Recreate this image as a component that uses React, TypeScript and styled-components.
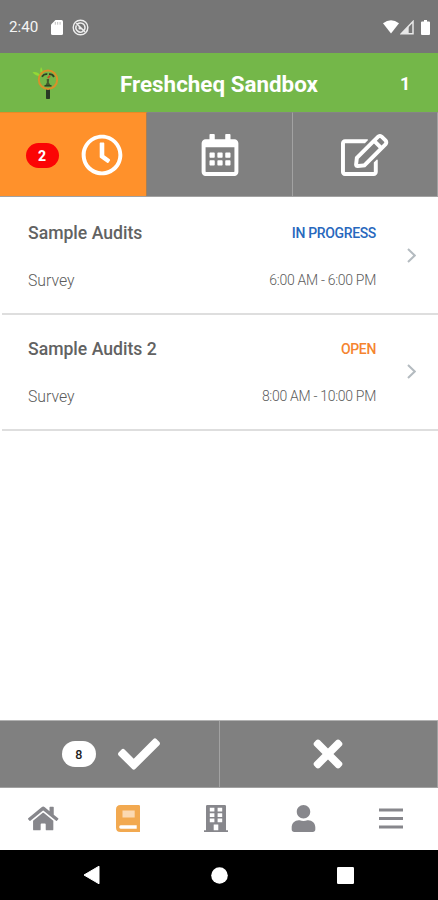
import React from "react";
import styled, { createGlobalStyle, css } from "styled-components";
import {
  FaRegClock,
  FaRegCalendarAlt,
  FaRegEdit,
  FaCheck,
  FaTimes,
  FaHome,
  FaUser,
} from "react-icons/fa";

const GlobalStyle = createGlobalStyle`
  * { box-sizing: border-box; }
  body { margin: 0; background: #fff; font-family: Roboto, "Liberation Sans", sans-serif; }
`;

const Screen = styled.div`
  width: 438px;
  height: 900px;
  display: flex;
  flex-direction: column;
  background: #fff;
  overflow: hidden;
`;

const StatusBar = styled.div`
  height: 53px;
  flex: none;
  display: flex;
  align-items: center;
  padding: 1px 8px 0 9px;
  background: #767676;
  color: #f4f4f4;
  svg { display: block; flex: none; }
`;

const Time = styled.span`
  width: 42px;
  font-size: 15.2px;
  line-height: 20px;
`;

const StatusGroup = styled.div<{ $gap: number; $end?: boolean }>`
  display: flex;
  align-items: center;
  gap: ${(p) => p.$gap}px;
  ${(p) => p.$end && css`margin-left: auto;`}
`;

const BatterySlot = styled.span`
  padding-left: 6px;
`;

const Header = styled.header`
  height: 59px;
  flex: none;
  display: grid;
  grid-template-columns: 94px 250px 94px;
  align-items: center;
  background: #74b749;
  color: #fff;
`;

const Logo = styled.div`
  padding: 2px 0 0 32px;
  svg { display: block; }
`;

const Title = styled.h1`
  margin: 3px 0 0;
  text-align: center;
  font-size: 22.4px;
  line-height: 28px;
  font-weight: 700;
  white-space: nowrap;
`;

const HeaderCount = styled.span`
  padding: 2px 0 0 56px;
  font-size: 18px;
  font-weight: 700;
`;

const Tabs = styled.nav`
  height: 85px;
  flex: none;
  display: grid;
  grid-template-columns: 147px 146px 145px;
  border-bottom: 1px solid #a2a2a2;
`;

const Tab = styled.button<{ $active?: boolean }>`
  display: flex;
  align-items: center;
  justify-content: center;
  gap: 22px;
  margin: 0;
  padding: ${(p) => (p.$active ? "1px 0 0 2px" : "1px 0 0")};
  border: 0;
  border-top: 1px solid ${(p) => (p.$active ? "#e98a25" : "#858585")};
  border-right: 1px solid ${(p) => (p.$active ? "#a58058" : "#a2a2a2")};
  background: ${(p) => (p.$active ? "#ff912b" : "#808080")};
  color: #fff;
  svg { display: block; height: 42px; width: auto; flex: none; }
`;

const EditIcon = styled(FaRegEdit)`
  && { width: 47.25px; }
`;

const Badge = styled.span<{ $light?: boolean }>`
  width: ${(p) => (p.$light ? 34 : 33)}px;
  height: ${(p) => (p.$light ? 26 : 25)}px;
  border-radius: 13px;
  display: flex;
  align-items: center;
  justify-content: center;
  background: ${(p) => (p.$light ? "#fff" : "#fb0505")};
  color: ${(p) => (p.$light ? "#222" : "#fff")};
  font-family: Roboto, sans-serif;
  font-size: ${(p) => (p.$light ? 12.5 : 14)}px;
  font-weight: ${(p) => (p.$light ? 500 : 800)};
  padding-top: 1px;
`;

const List = styled.main`
  flex: 1;
  padding: 2px 0 0 2px;
`;

const Row = styled.article`
  height: 116px;
  display: grid;
  grid-template-columns: 1fr 62px;
  align-items: center;
  border-bottom: 2px solid #dedede;
`;

const RowBody = styled.div`
  display: grid;
  grid-template-columns: auto auto;
  grid-template-rows: 24px 24px;
  row-gap: 23px;
  align-items: center;
  padding: 1px 0 0 26px;
`;

const RowTitle = styled.h2`
  margin: 0;
  font-size: 17.6px;
  font-weight: 500;
  color: #626262;
`;

const RowStatus = styled.span<{ $color: string }>`
  justify-self: end;
  font-size: 14px;
  font-weight: 500;
  letter-spacing: -0.35px;
  color: ${(p) => p.$color};
`;

const RowKind = styled.span`
  font-size: 15.8px;
  font-weight: 300;
  color: #5c5c5c;
`;

const RowHours = styled(RowKind)`
  justify-self: end;
  font-size: 14px;
  letter-spacing: -0.3px;
`;

const Chevron = styled.svg`
  display: block;
  width: 9px;
  height: 15px;
  margin: -2px 0 0 31px;
`;

const Actions = styled.div`
  height: 68px;
  flex: none;
  display: grid;
  grid-template-columns: 219.5px 218.5px;
  border-top: 1px solid #b2b2b2;
  border-bottom: 1px solid #a2a2a2;
`;

const Action = styled(Tab)<{ $shift?: boolean }>`
  border-top: 0;
  border-right-color: #a2a2a2;
  padding: 0 0 0 ${(p) => (p.$shift ? 3 : 0)}px;
`;

const BottomNav = styled.nav`
  height: 62px;
  flex: none;
  display: grid;
  grid-template-columns: 87px 82px 93px 82px 93px;
  align-items: center;
  justify-items: center;
  padding-bottom: 1px;
  color: #87878c;
  svg { display: block; height: 27px; width: auto; }
`;

const HomeIcon = styled(FaHome)`
  && { width: 30.4px; }
`;

const SystemBar = styled.div`
  height: 50px;
  flex: none;
  display: grid;
  grid-template-columns: 126px 126px 126px;
  justify-content: center;
  justify-items: center;
  align-items: center;
  background: #000;
  svg { display: block; }
`;

const BackIcon = styled.svg`
  margin-right: 4px;
`;

const SdCard = () => (
  <svg width="12" height="15" viewBox="0 0 12 15">
    <path d="M4.5 0H10.5Q12 0 12 1.5V13.5Q12 15 10.5 15H1.5Q0 15 0 13.5V4.5Z" fill="#fff" />
    <path d="M4.3 2v2.7M6.7 2v2.7M9.1 2v2.7" stroke="#b5b5b5" strokeWidth=".9" />
  </svg>
);

const SyncOff = () => (
  <svg width="17" height="17" viewBox="0 0 17 17" fill="none" stroke="#eee">
    <circle cx="8.5" cy="8.5" r="7.3" strokeWidth="1.4" />
    <path
      d="M5.4 5.1A4.6 4.6 0 0 1 13 8.5 4.6 4.6 0 0 1 12.3 11M4.5 6.3A4.6 4.6 0 0 0 11 12.4M4.2 4.2l8.7 8.7M7 8.5a1.6 1.6 0 0 0 1.6 1.6"
      strokeWidth="1.5"
    />
  </svg>
);

const Wifi = () => (
  <svg width="16" height="14" viewBox="0 0 16 14">
    <path d="M0 3.2Q8-2.6 16 3.2L8 13.6Z" fill="#fff" />
  </svg>
);

const Signal = () => (
  <svg width="14" height="15" viewBox="0 0 14 15">
    <path d="M13 1.5V13.8H1.2Z" fill="none" stroke="#e8e8e8" strokeWidth="1.5" />
    <path d="M1 14 8.7 6V14Z" fill="#e8e8e8" />
  </svg>
);

const Battery = () => (
  <svg width="9" height="15" viewBox="0 0 9 15">
    <path d="M3 0H6V1.5H8Q9 1.5 9 2.5V14Q9 15 8 15H1Q0 15 0 14V2.5Q0 1.5 1 1.5H3Z" fill="#fff" />
  </svg>
);

const BrandMark = () => (
  <svg width="28" height="33" viewBox="0 0 28 33">
    <path d="M.5 5.2Q6 4.2 9.2 9.5Q3.5 9 .5 5.2ZM9 0Q12 4.5 10 8.5Q7 4.5 9 0Z" fill="#92d936" />
    <rect x="14" y="21.5" width="4" height="10.5" rx=".7" fill="#293a25" />
    <circle cx="16" cy="12.8" r="9.2" fill="none" stroke="#d9902a" strokeWidth="2" />
    <path d="M10 9.7Q12 6.5 15.3 7.2M17 7.2Q20.5 7 22 10" fill="none" stroke="#2d4324" strokeWidth="1.7" />
    <path d="M15.8 11.2 18 8.6" stroke="#c7532b" strokeWidth="2" />
    <path d="M14.7 12h2.4l-.3 3.4 2 3.3h-5.6l1.7-3.3Z" fill="#425b2d" />
    <path d="M12.5 18.8h7" stroke="#2d4324" strokeWidth="1.6" />
  </svg>
);

const Book = () => (
  <svg viewBox="0 0 24 27">
    <path
      fillRule="evenodd"
      d="M4.5 0H22.7Q24 0 24 1.3V27H4.5Q0 27 0 22.5V4.5Q0 0 4.5 0ZM4.7 20.3Q3.2 20.3 3.2 22T4.7 23.7H20.7V20.3Z"
      fill="#f2a950"
    />
    <rect x="6.5" y="5.5" width="12.2" height="7" fill="#fbd9b2" />
  </svg>
);

const Building = () => (
  <svg viewBox="0 0 24 27" fill="#87878c">
    <path d="M3.2 0H20.8Q22 0 22 1.3V25.2H24V27H0V25.2H2V1.3Q2 0 3.2 0Z" />
    <path
      d="M5.8 2.8h4.6v3.7H5.8zM13.6 2.8h4.6v3.7h-4.6zM5.8 8.2h4.6v3.7H5.8zM13.6 8.2h4.6v3.7h-4.6zM5.8 13.6h4.6v3.7H5.8zM13.6 13.6h4.6v3.7h-4.6zM9.7 19.4h4.6v5.8H9.7z"
      fill="#fff"
    />
  </svg>
);

const Menu = () => (
  <svg viewBox="0 0 24 27">
    <path d="M0 5h24M0 13.5h24M0 22h24" stroke="#87878c" strokeWidth="3" />
  </svg>
);

const audits = [
  { title: "Sample Audits", status: "IN PROGRESS", color: "#2868bd", hours: "6:00 AM - 6:00 PM" },
  { title: "Sample Audits 2", status: "OPEN", color: "#f5842f", hours: "8:00 AM - 10:00 PM" },
];

export default function App() {
  return (
    <Screen>
      <GlobalStyle />
      <StatusBar>
        <Time>2:40</Time>
        <StatusGroup $gap={9}>
          <SdCard />
          <SyncOff />
        </StatusGroup>
        <StatusGroup $gap={1} $end>
          <Wifi />
          <Signal />
          <BatterySlot>
            <Battery />
          </BatterySlot>
        </StatusGroup>
      </StatusBar>
      <Header>
        <Logo>
          <BrandMark />
        </Logo>
        <Title>Freshcheq Sandbox</Title>
        <HeaderCount>1</HeaderCount>
      </Header>
      <Tabs>
        <Tab $active>
          <Badge>2</Badge>
          <FaRegClock />
        </Tab>
        <Tab>
          <FaRegCalendarAlt />
        </Tab>
        <Tab>
          <EditIcon />
        </Tab>
      </Tabs>
      <List>
        {audits.map((a) => (
          <Row key={a.title}>
            <RowBody>
              <RowTitle>{a.title}</RowTitle>
              <RowStatus $color={a.color}>{a.status}</RowStatus>
              <RowKind>Survey</RowKind>
              <RowHours>{a.hours}</RowHours>
            </RowBody>
            <Chevron viewBox="0 0 9 15">
              <path d="M1 1l6.7 6.5L1 14" fill="none" stroke="#b4bbc0" strokeWidth="2" />
            </Chevron>
          </Row>
        ))}
      </List>
      <Actions>
        <Action $shift>
          <Badge $light>8</Badge>
          <FaCheck />
        </Action>
        <Action>
          <FaTimes />
        </Action>
      </Actions>
      <BottomNav>
        <HomeIcon />
        <Book />
        <Building />
        <FaUser />
        <Menu />
      </BottomNav>
      <SystemBar>
        <BackIcon width="17" height="20" viewBox="0 0 17 20">
          <path d="M16 1.2V18.8L1 10Z" fill="#fff" stroke="#fff" strokeLinejoin="round" />
        </BackIcon>
        <svg width="17" height="17" viewBox="0 0 17 17">
          <circle cx="8.5" cy="8.5" r="8.3" fill="#fff" />
        </svg>
        <svg width="17" height="17" viewBox="0 0 17 17">
          <rect width="17" height="17" rx="1.2" fill="#fff" />
        </svg>
      </SystemBar>
    </Screen>
  );
}
